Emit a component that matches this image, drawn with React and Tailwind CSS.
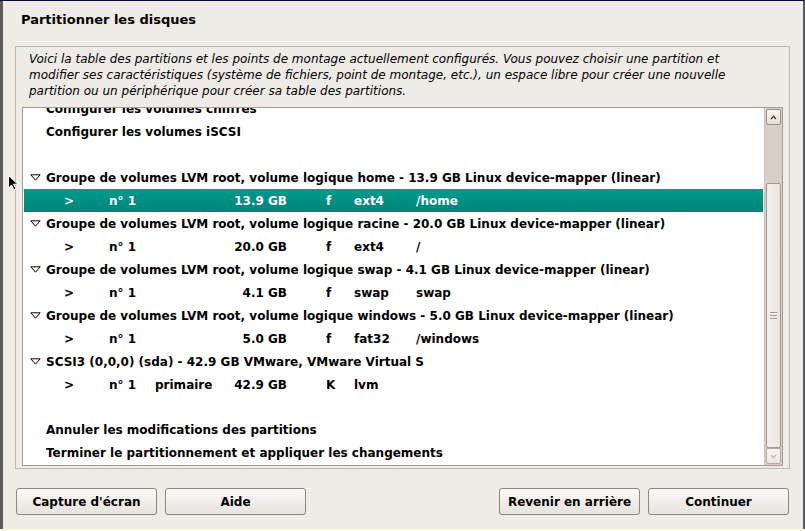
import React from 'react';

const font = { fontFamily: '"DejaVu Sans", "Liberation Sans", sans-serif' };

const Triangle = () => (
  <svg width="11" height="7" viewBox="0 0 11 7" className="shrink-0">
    <path d="M0.8 0.8 L10.2 0.8 L5.5 6.2 Z" fill="none" stroke="#000" strokeWidth="1" />
  </svg>
);

const PartRow = ({ num, type, size, flag, fs, mount, selected }) => (
  <div
    className={`h-[23px] flex items-center mx-px whitespace-nowrap font-bold text-[12px] ${
      selected ? 'bg-gradient-to-b from-[#019a8c] to-[#00857a] text-white' : 'text-black'
    }`}
  >
    <span className="w-[40px]" />
    <span className="w-[45px]">&gt;</span>
    <span className="w-[46px]">{num}</span>
    <span className="w-[132px] flex">
      <span>{type}</span>
      <span className="ml-auto">{size}</span>
    </span>
    <span className="w-[67px] pl-[39px]">{flag}</span>
    <span className="w-[62px]">{fs}</span>
    <span>{mount}</span>
  </div>
);

const GroupRow = ({ children }) => (
  <div className="h-[23px] flex items-center mx-px whitespace-nowrap font-bold text-[12px] text-black">
    <span className="w-[22px] flex justify-center pl-[1px]">
      <Triangle />
    </span>
    <span>{children}</span>
  </div>
);

const ActionRow = ({ children }) => (
  <div className="h-[23px] flex items-center mx-px pl-[22px] whitespace-nowrap font-bold text-[12px] text-black">
    {children}
  </div>
);

const Button = ({ children }) => (
  <button className="w-[141px] h-[27px] rounded-[3px] border border-[#8f867c] bg-gradient-to-b from-[#fbfaf9] to-[#e7e2dc] text-[12px] font-bold text-black">
    {children}
  </button>
);

export default function App() {
  return (
    <div className="relative w-[805px] h-[531px] flex flex-col bg-[#efebe7] overflow-hidden" style={font}>
      <div className="h-px bg-[#0b0b2e]" />
      <div className="flex-1 flex min-h-0">
        <div className="w-[3px] bg-[#5b5b5b]" />
        <div className="flex-1 flex flex-col">
          {/* title */}
          <div className="h-[45px] pl-[18px] pt-[11px] text-[13px] leading-[16px] font-bold text-black">
            Partitionner les disques
          </div>

          {/* frame */}
          <div className="ml-[12px] mr-[13px] h-[423px] border border-[#bfb7ab] flex flex-col">
            <div className="pl-[13px] pt-[4px] text-[12px] leading-[16px] italic text-black whitespace-nowrap">
              <div>Voici la table des partitions et les points de montage actuellement configurés. Vous pouvez choisir une partition et</div>
              <div>modifier ses caractéristiques (système de fichiers, point de montage, etc.), un espace libre pour créer une nouvelle</div>
              <div>partition ou un périphérique pour créer sa table des partitions.</div>
            </div>

            <div className="mt-[8px] mx-[6px] h-[359px] border border-[#a69d92] bg-white flex">
              <div className="flex-1 overflow-hidden">
                {/* list scrolled a little down */}
                <div className="-mt-[11px]">
                  <ActionRow>Configurer les volumes chiffrés</ActionRow>
                  <ActionRow>Configurer les volumes iSCSI</ActionRow>
                  <div className="h-[23px]" />
                  <GroupRow>Groupe de volumes LVM root, volume logique home - 13.9 GB Linux device-mapper (linear)</GroupRow>
                  <PartRow num="n° 1" size="13.9 GB" flag="f" fs="ext4" mount="/home" selected />
                  <GroupRow>Groupe de volumes LVM root, volume logique racine - 20.0 GB Linux device-mapper (linear)</GroupRow>
                  <PartRow num="n° 1" size="20.0 GB" flag="f" fs="ext4" mount="/" />
                  <GroupRow>Groupe de volumes LVM root, volume logique swap - 4.1 GB Linux device-mapper (linear)</GroupRow>
                  <PartRow num="n° 1" size="4.1 GB" flag="f" fs="swap" mount="swap" />
                  <GroupRow>Groupe de volumes LVM root, volume logique windows - 5.0 GB Linux device-mapper (linear)</GroupRow>
                  <PartRow num="n° 1" size="5.0 GB" flag="f" fs="fat32" mount="/windows" />
                  <GroupRow>SCSI3 (0,0,0) (sda) - 42.9 GB VMware, VMware Virtual S</GroupRow>
                  <PartRow num="n° 1" type="primaire" size="42.9 GB" flag="K" fs="lvm" />
                  <div className="h-[22px]" />
                  <ActionRow>Annuler les modifications des partitions</ActionRow>
                  <ActionRow>Terminer le partitionnement et appliquer les changements</ActionRow>
                </div>
              </div>

              {/* scrollbar */}
              <div className="w-[18px] bg-[#d8d0c6] flex flex-col border-l border-[#c9c1b6]">
                <div className="h-[16px] mx-[1px] mt-px rounded-[2px] border border-[#9c9287] bg-gradient-to-b from-[#f7f5f2] to-[#e4ded7] flex items-center justify-center">
                  <svg width="7" height="5" viewBox="0 0 7 5">
                    <path d="M1 4 L3.5 1.2 L6 4" fill="none" stroke="#333" strokeWidth="1.2" />
                  </svg>
                </div>
                <div className="h-[58px]" />
                <div className="flex-1 mx-[1px] rounded-[2px] border border-[#a3998d] bg-gradient-to-r from-[#f3f0ec] to-[#e9e4de] flex items-center justify-center">
                  <div className="flex flex-col gap-[2px]">
                    <div className="w-[7px] h-px bg-[#a89e93]" />
                    <div className="w-[7px] h-px bg-[#a89e93]" />
                    <div className="w-[7px] h-px bg-[#a89e93]" />
                  </div>
                </div>
                <div className="h-[16px] mx-[1px] mb-px rounded-[2px] border border-[#b4aba0] bg-gradient-to-b from-[#f7f5f2] to-[#ebe6e0] flex items-center justify-center">
                  <svg width="7" height="5" viewBox="0 0 7 5">
                    <path d="M1 1 L3.5 3.8 L6 1" fill="none" stroke="#aaa" strokeWidth="1.1" />
                  </svg>
                </div>
              </div>
            </div>
          </div>

          {/* buttons */}
          <div className="mt-[19px] flex pl-[13px] pr-[14px]">
            <div className="flex gap-[8px]">
              <Button>Capture d'écran</Button>
              <Button>Aide</Button>
            </div>
            <div className="ml-auto flex gap-[8px]">
              <Button>Revenir en arrière</Button>
              <Button>Continuer</Button>
            </div>
          </div>
        </div>
        <div className="w-[2px] bg-[#5b5b5b]" />
      </div>
      <div className="h-[2px] bg-[#fdfde2]" />

      {/* mouse pointer */}
      <svg className="absolute left-[8px] top-[175px]" width="11" height="16" viewBox="0 0 11 16">
        <path d="M0.5 0.5 L0.5 13 L3.5 10 L6 15 L8 14 L5.5 9.2 L9.8 9.2 Z" fill="#000" stroke="#fff" strokeWidth="1" />
      </svg>
    </div>
  );
}
